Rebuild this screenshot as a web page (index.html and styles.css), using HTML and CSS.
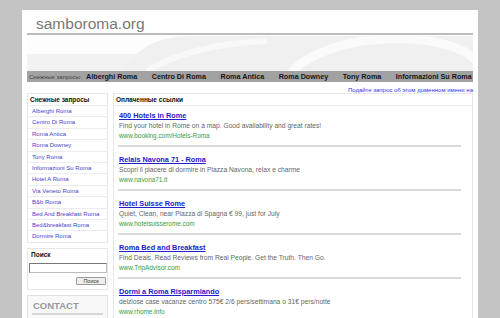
FILE: index.html
```html
<!DOCTYPE html>
<html lang="ru">
<head>
  <meta charset="UTF-8" />
  <meta name="viewport" content="width=device-width, initial-scale=1.0"/>
  <title>samboroma.org</title>
  <link rel="stylesheet" href="styles.css">
</head>
<body>
  <div class="page">
    <div class="top">
      <div class="logo">samboroma.org</div>
    </div>

    <!-- decorative header strip -->
    <svg class="swoosh" width="446" height="36" viewBox="0 0 446 36">
      <rect width="446" height="36" fill="#fdfdfd"/>
      <rect y="19" width="446" height="17" fill="#f2f2f2"/>
      <path d="M95 36 C112 12 130 1 165 1 L446 1 L446 36 Z" fill="#f0f0f0"/>
      <path d="M262 40 C300 -6 420 -6 450 26" stroke="#fafafa" stroke-width="9" fill="none"/>
      <path d="M120 36 C150 18 190 8 240 6" stroke="#f8f8f8" stroke-width="6" fill="none"/>
    </svg>

    <div class="nav">
      <span class="nav-label">Снежные запросы:</span>
      <a href="#">Alberghi Roma</a>
      <a href="#">Centro Di Roma</a>
      <a href="#">Roma Antica</a>
      <a href="#">Roma Downey</a>
      <a href="#">Tony Roma</a>
      <a href="#">Informazioni Su Roma</a>
    </div>

    <div class="offer">
      <a href="#">Подайте запрос об этом доменном имени на</a>
    </div>

    <div class="cols">
      <div class="side">
        <div class="box">
          <div class="box-head">Снежные запросы</div>
          <ul class="rel">
            <li><a href="#">Alberghi Roma</a></li>
            <li><a href="#">Centro Di Roma</a></li>
            <li><a href="#">Roma Antica</a></li>
            <li><a href="#">Roma Downey</a></li>
            <li><a href="#">Tony Roma</a></li>
            <li><a href="#">Informazioni Su Roma</a></li>
            <li><a href="#">Hotel A Roma</a></li>
            <li><a href="#">Via Veneto Roma</a></li>
            <li><a href="#">B&amp;b Roma</a></li>
            <li><a href="#">Bed And Breakfast Roma</a></li>
            <li><a href="#">Bed&amp;breakfast Roma</a></li>
            <li><a href="#">Dormire Roma</a></li>
          </ul>
        </div>

        <form class="box search">
          <div class="search-head">Поиск</div>
          <input type="text" class="search-input" />
          <div class="search-row">
            <button type="button" class="search-btn">Поиск</button>
          </div>
        </form>

        <div class="box contact">
          <h3>CONTACT</h3>
        </div>
      </div>

      <div class="main box">
        <div class="box-head">Оплаченные ссылки</div>

        <div class="ad">
          <a class="ad-title" href="#">400 Hotels in Rome</a>
          <div class="ad-text">Find your hotel in Rome on a map. Good availability and great rates!</div>
          <div class="ad-url">www.booking.com/Hotels-Roma</div>
        </div>

        <div class="ad">
          <a class="ad-title" href="#">Relais Navona 71 - Roma</a>
          <div class="ad-text">Scopri il piacere di dormire in Piazza Navona, relax e charme</div>
          <div class="ad-url">www.navona71.it</div>
        </div>

        <div class="ad">
          <a class="ad-title" href="#">Hotel Suisse Rome</a>
          <div class="ad-text">Quiet, Clean, near Piazza di Spagna € 99, just for July</div>
          <div class="ad-url">www.hotelsuisserome.com</div>
        </div>

        <div class="ad">
          <a class="ad-title" href="#">Roma Bed and Breakfast</a>
          <div class="ad-text">Find Deals, Read Reviews from Real People. Get the Truth. Then Go.</div>
          <div class="ad-url">www.TripAdvisor.com</div>
        </div>

        <div class="ad">
          <a class="ad-title" href="#">Dormi a Roma Risparmiando</a>
          <div class="ad-text">delziose case vacanze centro 575€ 2/6 pers/settimana o 31€ pers/notte</div>
          <div class="ad-url">www.rhome.info</div>
        </div>
      </div>
    </div>
  </div>
</body>
</html>
```

FILE: styles.css
```css
body {
  margin: 0;
  padding: 0;
  background: #c4c4c4;
  font-family: 'Liberation Sans', Arial, sans-serif;
  color: #333;
}

.page {
  width: 446px;
  min-height: 330px;
  margin: 10px auto 0;
  padding: 0 5px;
  background: #fff;
}

.top {
  height: 23px;
  border-bottom: 2px solid #bcbcbc;
}

.logo {
  padding: 4px 0 0 9px;
  line-height: 19px;
  font-size: 15.5px;
  color: #777;
}

.swoosh {
  display: block;
}

.nav {
  display: flex;
  align-items: center;
  gap: 14.5px;
  height: 11px;
  padding-left: 2px;
  background: #a2a2a2;
  white-space: nowrap;
  overflow: hidden;
}

.nav-label {
  margin-right: -10px;
  font-size: 6px;
  color: #444;
}

.nav a {
  font-size: 7.2px;
  font-weight: bold;
  color: #161616;
  text-decoration: none;
}

.offer {
  height: 11px;
  text-align: right;
  line-height: 10px;
}

.offer a {
  font-size: 6px;
  color: #3333ee;
}

.cols {
  display: flex;
  gap: 5px;
  align-items: flex-start;
}

.side {
  width: 81px;
}

.box {
  border: 1px solid #e6e6e6;
  background: #fff;
}

.box-head {
  height: 11px;
  padding-left: 2px;
  line-height: 12px;
  font-size: 6.5px;
  font-weight: bold;
  color: #111;
  border-bottom: 1px solid #ececec;
}

.rel {
  list-style: none;
  margin: 0;
  padding: 0;
}

.rel li {
  height: 10.4px;
  padding-left: 4px;
  line-height: 10.4px;
  border-bottom: 1px solid #ececec;
  font-size: 6px;
  white-space: nowrap;
}

.rel li:last-child {
  border-bottom: none;
}

.rel a {
  color: #4444cc;
  text-decoration: none;
}

.search {
  margin: 5px 0 0;
  padding: 1px 0 4px 1px;
}

.search-head {
  padding-left: 2px;
  line-height: 10px;
  font-size: 6.5px;
  font-weight: bold;
  color: #111;
}

.search-input {
  display: block;
  box-sizing: border-box;
  width: 78px;
  height: 10px;
  margin: 3px 0 0;
  padding: 0;
  border: 1px solid #777;
  border-right-color: #bbb;
  border-bottom-color: #bbb;
}

.search-row {
  display: flex;
  justify-content: flex-end;
  padding-right: 1px;
  margin-top: 4px;
}

.search-btn {
  width: 30px;
  height: 8px;
  padding: 0;
  font-family: 'Liberation Sans', Arial, sans-serif;
  font-size: 5.5px;
  line-height: 6px;
  color: #333;
  background: #eee;
  border: 1px solid #999;
  border-radius: 1px;
}

.contact {
  margin-top: 5px;
  min-height: 40px;
  background: #f8f8f8;
  border-color: #e0e0e0;
}

.contact h3 {
  margin: 0 4px;
  padding: 5px 0 2px 1px;
  font-size: 9.5px;
  line-height: 10px;
  color: #999;
  border-bottom: 2px solid #d6d6d6;
}

.main {
  width: 358px;
  min-height: 240px;
}

.main .box-head {
  border-bottom: 1px solid #ececec;
}

.ad {
  margin: 0 11px 0 4px;
  padding: 8px 0 4px 1px;
  border-bottom: 2px solid #dadada;
}

.main .ad:nth-child(2) {
  padding-top: 5px;
}

.ad-title {
  display: block;
  line-height: 10px;
  font-size: 7.3px;
  font-weight: bold;
  color: #2020cc;
}

.ad-text {
  line-height: 10px;
  font-size: 6.7px;
  color: #666;
  white-space: nowrap;
}

.ad-url {
  line-height: 10px;
  font-size: 6.4px;
  color: #3a9a3a;
}
```
